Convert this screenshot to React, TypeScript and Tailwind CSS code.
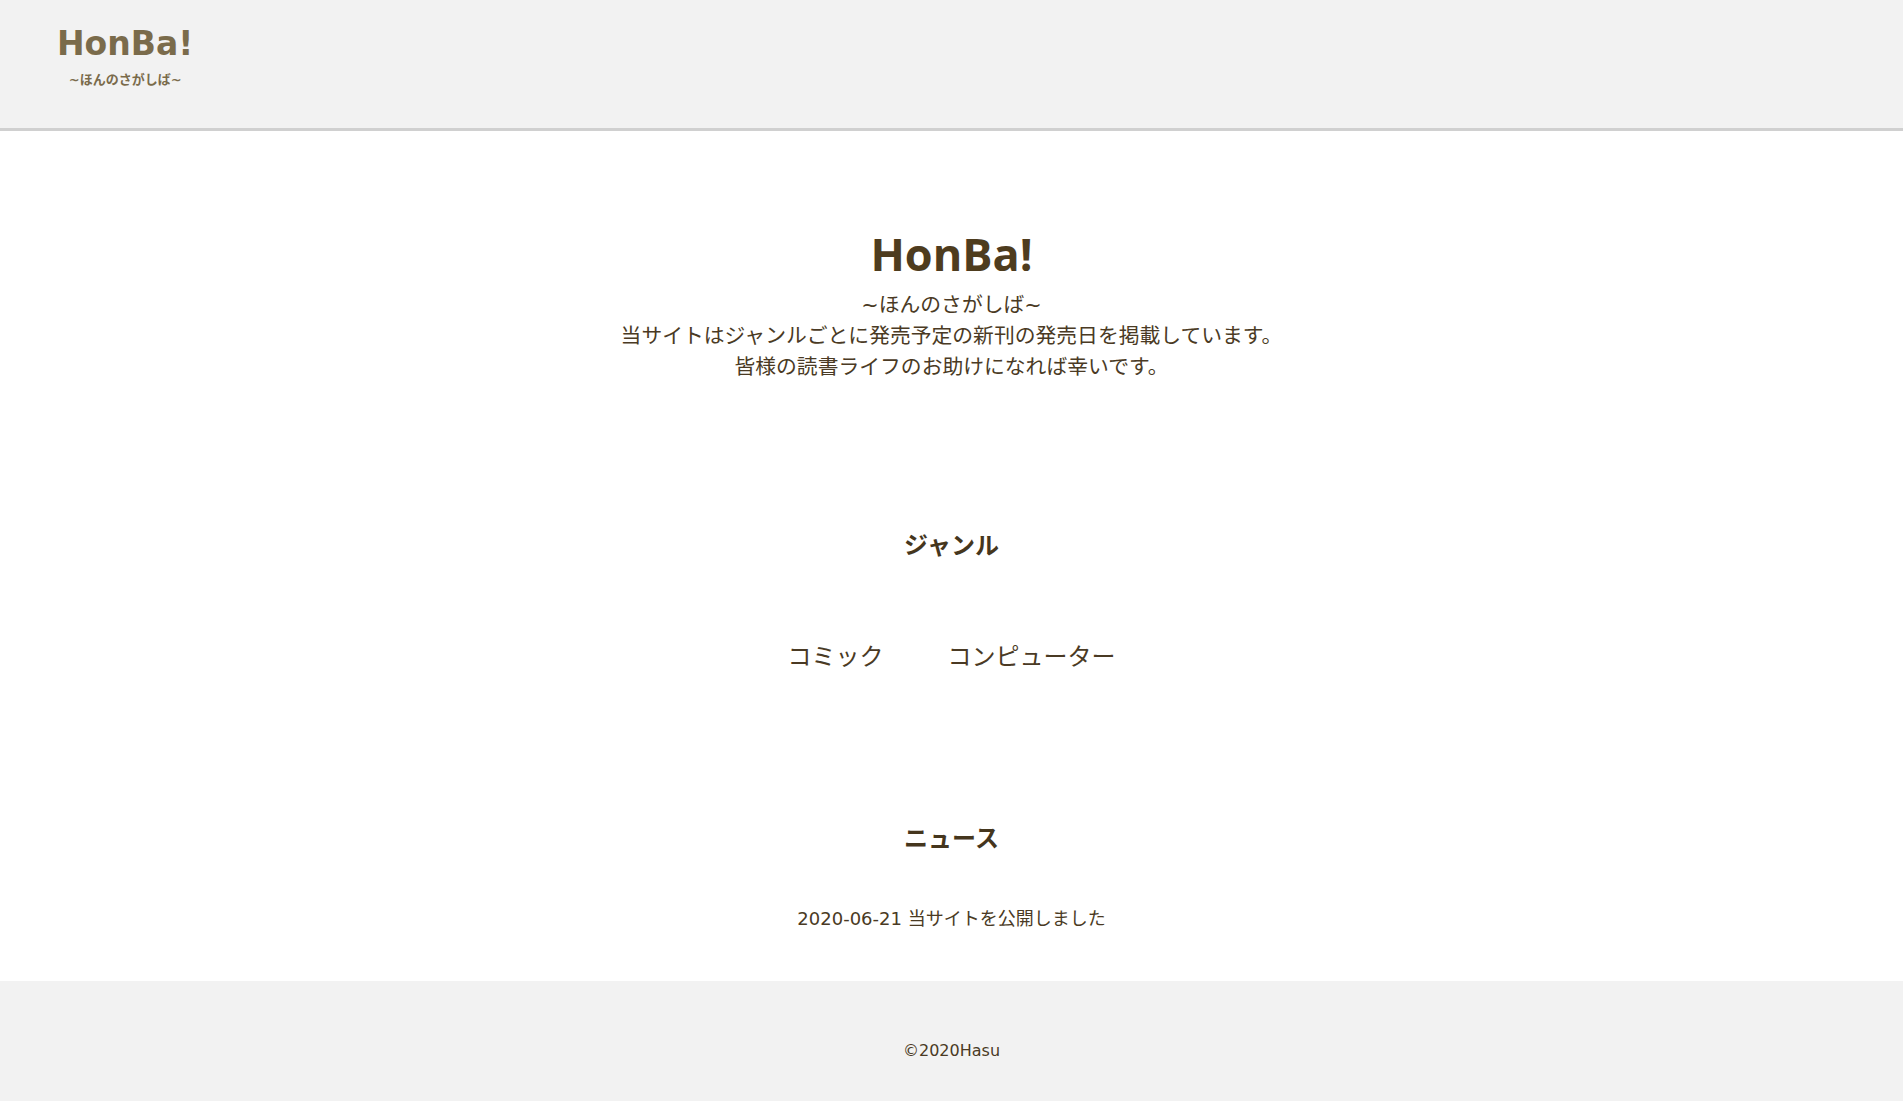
const genres = ['コミック', 'コンピューター']

const news = [{ date: '2020-06-21', text: '当サイトを公開しました' }]

export default function App() {
  return (
    <div className="min-h-screen bg-white text-[#4a3a24] font-[family-name:'DejaVu_Sans','Noto_Sans_CJK_JP',sans-serif]">
      {/* header */}
      <header className="h-[131px] bg-[#f2f2f2] border-b-[3px] border-[#d0d0d0] pl-[57px] pt-[27px]">
        <div className="inline-flex flex-col items-center text-[#7a6b4b]">
          <h1 className="text-[33px] leading-none font-bold font-[family-name:'DejaVu_Sans',sans-serif]">HonBa!</h1>
          <p className="mt-[12px] text-[13px] leading-[16px] font-bold">~ほんのさがしば~</p>
        </div>
      </header>

      <main className="flex flex-col items-center text-center pt-[100px] pb-[49px]">
        <h2 className="text-[45px] leading-none font-bold text-[#4e3c1e] font-[family-name:'Open_Sans',sans-serif]">HonBa!</h2>
        <div className="mt-[14px] text-[20.8px] leading-[31px]">
          <p>~ほんのさがしば~</p>
          <p>当サイトはジャンルごとに発売予定の新刊の発売日を掲載しています。</p>
          <p>皆様の読書ライフのお助けになれば幸いです。</p>
        </div>

        <h3 className="mt-[145px] text-[24px] leading-[36px] font-bold text-[#45361d]">ジャンル</h3>
        <ul className="mt-[75px] flex gap-[64px] text-[24px] leading-[36px]">
          {genres.map((g) => (
            <li key={g}>
              <a href="#">{g}</a>
            </li>
          ))}
        </ul>

        <h3 className="mt-[146px] text-[24px] leading-[36px] font-bold text-[#45361d]">ニュース</h3>
        <ul className="mt-[48px] text-[18px] leading-[27px]">
          {news.map((n) => (
            <li key={n.date}>
              {n.date} {n.text}
            </li>
          ))}
        </ul>
      </main>

      <footer className="bg-[#f2f2f2] pt-[59px] pb-[57px] text-center text-[16px] leading-[22px]">
        <small className="text-[16px]">©2020Hasu</small>
      </footer>
    </div>
  )
}
